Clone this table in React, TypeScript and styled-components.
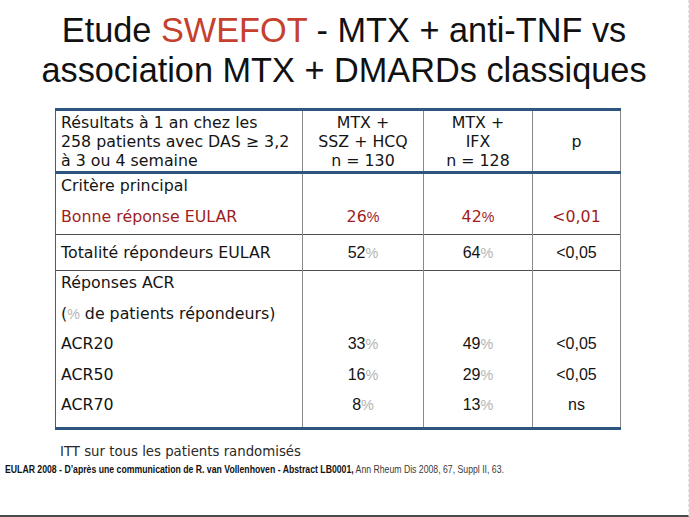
import React from "react";
import styled, { createGlobalStyle } from "styled-components";

const Global = createGlobalStyle`
  html, body { margin: 0; padding: 0; background: #fff; }
  body { font-family: "Liberation Sans", Arial, sans-serif; }
`;

const Page = styled.div`
  position: relative;
  width: 689px;
  height: 517px;
  box-sizing: border-box;
  border-bottom: 2px solid #4a4a4a;
  border-right: 1px dashed #e2e2e2;
  display: flex;
  flex-direction: column;
  overflow: hidden;
`;

const Title = styled.h1`
  margin: 0;
  padding-top: 10px;
  font-family: "Liberation Sans", Arial, sans-serif;
  font-weight: normal;
  font-size: 34.3px;
  line-height: 40px;
  text-align: center;
  color: #111;
`;

const Accent = styled.span`
  color: #c6402e;
`;

const Table = styled.table`
  margin: 18px 0 0 55px;
  width: 565px;
  border-collapse: collapse;
  table-layout: fixed;
  font-family: "DejaVu Sans", "Open Sans", sans-serif;
  font-size: 15.8px;
  color: #141414;
`;

const Row = styled.tr<{ $h: number; $top?: "thick" | "thin"; $bottom?: "thick" | "thin" }>`
  height: ${(p) => p.$h}px;
  ${(p) => (p.$top === "thick" ? "border-top: 3px solid #2c5580;" : p.$top === "thin" ? "border-top: 1px solid #4d4d4d;" : "")}
  ${(p) => (p.$bottom === "thick" ? "border-bottom: 3px solid #2c5580;" : "")}
`;

const Cell = styled.td<{ $align?: "left" | "center"; $valign?: "top" | "middle" | "bottom" }>`
  padding: 0 0 0 ${(p) => (p.$align === "left" ? "5px" : "0")};
  text-align: ${(p) => p.$align || "center"};
  vertical-align: ${(p) => p.$valign || "middle"};
  border-left: 1px solid #8a8a8a;
  border-right: 1px solid #8a8a8a;
  &:first-child { border-left-color: #5a5a5a; }
`;

const HeadLines = styled.div`
  line-height: 19px;
`;

const Lines = styled.div<{ $lh: number; $shift?: number }>`
  line-height: ${(p) => p.$lh}px;
  margin-top: ${(p) => p.$shift || 0}px;
`;

const Line = styled.div<{ $red?: boolean; $arial?: boolean }>`
  color: ${(p) => (p.$red ? "#9e1d1d" : "#141414")};
  font-family: ${(p) => (p.$arial ? `"Liberation Sans", Arial, sans-serif` : `"DejaVu Sans", "Open Sans", sans-serif`)};
  font-size: ${(p) => (p.$arial ? "16px" : "inherit")};
  white-space: nowrap;
`;

const Pct = styled.span<{ $red?: boolean }>`
  color: ${(p) => (p.$red ? "#9e1d1d" : "#b4b4b4")};
  font-family: "Liberation Sans", Arial, sans-serif;
  font-size: 0.9em;
`;

const Note = styled.div`
  margin: 12px 0 0 60px;
  font-family: "DejaVu Sans", "Open Sans", sans-serif;
  font-size: 13.3px;
  line-height: 20px;
  color: #2a2a2a;
`;

const Source = styled.div`
  margin: 0 0 0 5px;
  font-family: "Liberation Sans", Arial, sans-serif;
  font-size: 11px;
  line-height: 14px;
  color: #1a1a1a;
  white-space: nowrap;
  transform: scaleX(0.79);
  transform-origin: left center;
`;

const Strong = styled.b`
  font-weight: bold;
  color: #111;
`;

const Light = styled.span`
  color: #3a3a3a;
`;

const V = ({ n, red, arial }: { n: string; red?: boolean; arial?: boolean }) => (
  <Line $red={red} $arial={arial}>
    {n}
    <Pct $red={red}>%</Pct>
  </Line>
);

export default function App() {
  return (
    <>
      <Global />
      <Page>
        <Title>
          Etude <Accent>SWEFOT</Accent> - MTX + anti-TNF vs
          <br />
          association MTX + DMARDs classiques
        </Title>
        <Table>
          <colgroup>
            <col style={{ width: 247 }} />
            <col style={{ width: 121 }} />
            <col style={{ width: 109 }} />
            <col style={{ width: 88 }} />
          </colgroup>
          <tbody>
            <Row $h={63} $top="thick">
              <Cell $align="left">
                <HeadLines>
                  <Line>Résultats à 1 an chez les</Line>
                  <Line>258 patients avec DAS ≥ 3,2</Line>
                  <Line>à 3 ou 4 semaine</Line>
                </HeadLines>
              </Cell>
              <Cell>
                <HeadLines>
                  <Line>MTX +</Line>
                  <Line>SSZ + HCQ</Line>
                  <Line>n = 130</Line>
                </HeadLines>
              </Cell>
              <Cell>
                <HeadLines>
                  <Line>MTX +</Line>
                  <Line>IFX</Line>
                  <Line>n = 128</Line>
                </HeadLines>
              </Cell>
              <Cell>
                <Line>p</Line>
              </Cell>
            </Row>
            <Row $h={62} $top="thick">
              <Cell $align="left" $valign="top">
                <Lines $lh={31} $shift={-4}>
                  <Line>Critère principal</Line>
                  <Line $red>Bonne réponse EULAR</Line>
                </Lines>
              </Cell>
              <Cell $valign="top">
                <Lines $lh={31} $shift={-4}>
                  <Line>&nbsp;</Line>
                  <V n="26" red />
                </Lines>
              </Cell>
              <Cell $valign="top">
                <Lines $lh={31} $shift={-4}>
                  <Line>&nbsp;</Line>
                  <V n="42" red />
                </Lines>
              </Cell>
              <Cell $valign="top">
                <Lines $lh={31} $shift={-4}>
                  <Line>&nbsp;</Line>
                  <Line $red>&lt;0,01</Line>
                </Lines>
              </Cell>
            </Row>
            <Row $h={36} $top="thin">
              <Cell $align="left">
                <Line>Totalité répondeurs EULAR</Line>
              </Cell>
              <Cell>
                <V n="52" arial />
              </Cell>
              <Cell>
                <V n="64" arial />
              </Cell>
              <Cell>
                <Line $arial>&lt;0,05</Line>
              </Cell>
            </Row>
            <Row $h={158} $top="thin" $bottom="thick">
              <Cell $align="left" $valign="top">
                <Lines $lh={30.6} $shift={-3}>
                  <Line>Réponses ACR</Line>
                  <Line>
                    (<Pct>%</Pct> de patients répondeurs)
                  </Line>
                  <Line>ACR20</Line>
                  <Line>ACR50</Line>
                  <Line>ACR70</Line>
                </Lines>
              </Cell>
              <Cell $valign="top">
                <Lines $lh={30.6} $shift={-3}>
                  <Line>&nbsp;</Line>
                  <Line>&nbsp;</Line>
                  <V n="33" arial />
                  <V n="16" arial />
                  <V n="8" arial />
                </Lines>
              </Cell>
              <Cell $valign="top">
                <Lines $lh={30.6} $shift={-3}>
                  <Line>&nbsp;</Line>
                  <Line>&nbsp;</Line>
                  <V n="49" arial />
                  <V n="29" arial />
                  <V n="13" arial />
                </Lines>
              </Cell>
              <Cell $valign="top">
                <Lines $lh={30.6} $shift={-3}>
                  <Line>&nbsp;</Line>
                  <Line>&nbsp;</Line>
                  <Line $arial>&lt;0,05</Line>
                  <Line $arial>&lt;0,05</Line>
                  <Line $arial>ns</Line>
                </Lines>
              </Cell>
            </Row>
          </tbody>
        </Table>
        <Note>ITT sur tous les patients randomisés</Note>
        <Source>
          <Strong>
            EULAR 2008 - D’après une communication de R. van Vollenhoven - Abstract LB0001,
          </Strong>{" "}
          <Light>Ann Rheum Dis 2008, 67, Suppl II, 63.</Light>
        </Source>
      </Page>
    </>
  );
}
